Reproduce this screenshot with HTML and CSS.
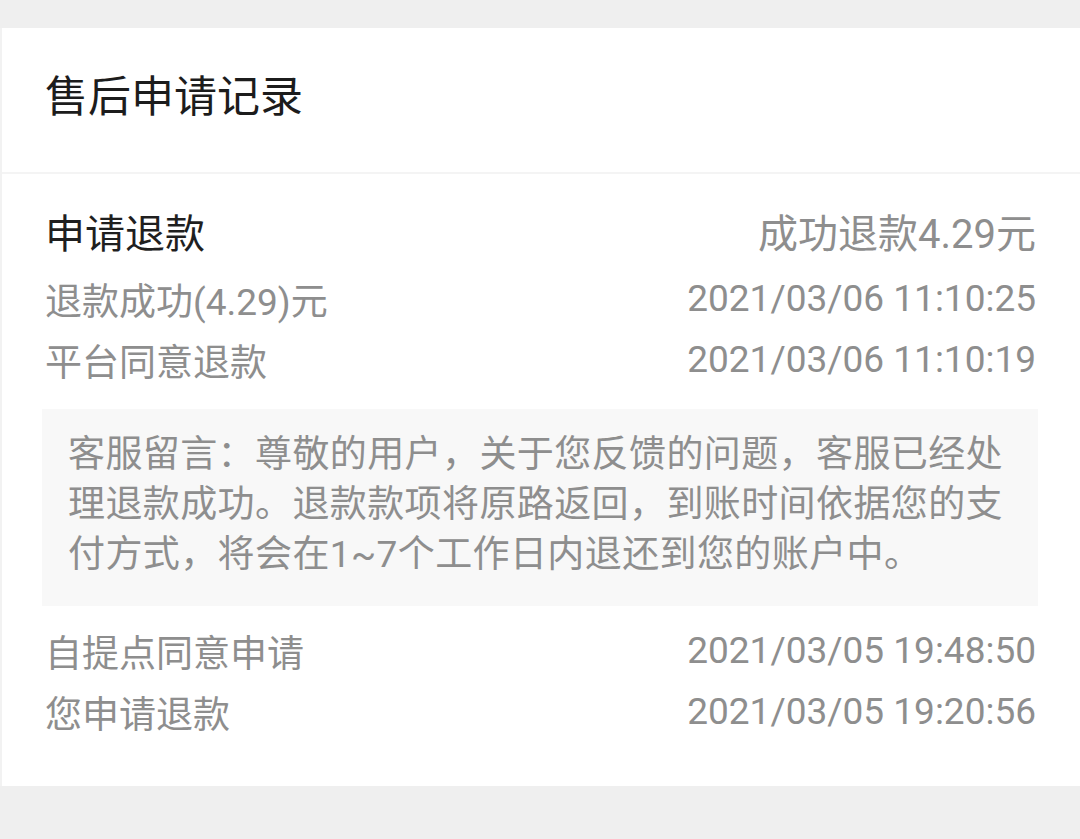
FILE: index.html
```html
<!DOCTYPE html>
<html lang="zh-CN">
<head>
<meta charset="utf-8">
<title>售后申请记录</title>
<link rel="stylesheet" href="styles.css">
</head>
<body>
<div class="page">
  <div class="card">
    <div class="header">
      <h1 class="title">售后申请记录</h1>
    </div>
    <div class="divider"></div>
    <div class="content">
      <div class="row row-main">
        <span class="main-label">申请退款</span>
        <span class="main-value">成功退款4.29元</span>
      </div>
      <div class="row row-gap">
        <span>退款成功(4.29)元</span>
        <span class="time">2021/03/06 11:10:25</span>
      </div>
      <div class="row">
        <span>平台同意退款</span>
        <span class="time">2021/03/06 11:10:19</span>
      </div>
      <div class="message">客服留言：尊敬的用户，关于您反馈的问题，客服已经处理退款成功。退款款项将原路返回，到账时间依据您的支付方式，将会在1~7个工作日内退还到您的账户中。</div>
      <div class="row">
        <span>自提点同意申请</span>
        <span class="time">2021/03/05 19:48:50</span>
      </div>
      <div class="row">
        <span>您申请退款</span>
        <span class="time">2021/03/05 19:20:56</span>
      </div>
    </div>
  </div>
</div>
</body>
</html>
```

FILE: styles.css
```css
html, body {
  margin: 0;
  padding: 0;
}
body {
  background: #efefef;
  font-family: Roboto, "Noto Sans CJK SC", sans-serif;
  width: 1080px;
  height: 839px;
  overflow: hidden;
}
.page {
  padding-top: 28px;
}
.card {
  background: #ffffff;
  border-left: 2px solid #f2f2f2;
}
.header {
  height: 144px;
  display: flex;
  align-items: center;
  padding-left: 43px;
  padding-bottom: 6px;
  box-sizing: border-box;
}
.title {
  margin: 0;
  font-weight: 400;
  font-size: 43px;
  color: #1c1c1c;
  line-height: 1;
}
.divider {
  height: 2px;
  background: #f4f4f4;
}
.content {
  padding: 26px 44px 44px 43px;
  display: flex;
  flex-direction: column;
}
.row {
  height: 61px;
  display: flex;
  align-items: center;
  justify-content: space-between;
  font-size: 37px;
  color: #8e8e8e;
}
.row-main {
  font-size: 40px;
}
.main-label {
  color: #1f1f1f;
}
.main-value {
  color: #8e8e8e;
}
.row-gap {
  margin-top: 7px;
}
.message {
  margin: 19px -2px 14px -3px;
  background: #f8f8f8;
  padding: 21px 20px 26px 26px;
  font-size: 37px;
  letter-spacing: 0.4px;
  line-height: 50px;
  color: #8e8e8e;
}
```
